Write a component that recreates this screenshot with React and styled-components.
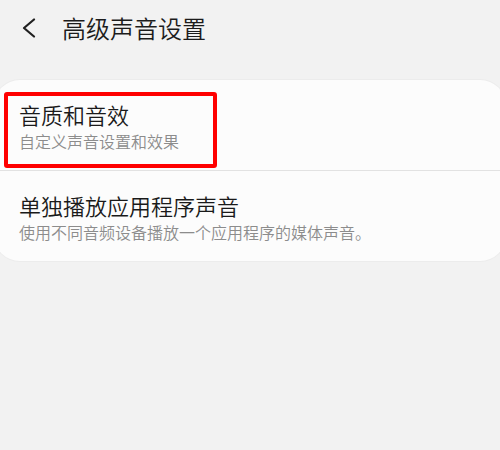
import styled, { createGlobalStyle } from 'styled-components';

const GlobalStyle = createGlobalStyle`
  html, body {
    margin: 0;
    padding: 0;
    background: #f2f2f2;
    overflow: hidden;
  }
  body {
    font-family: "Noto Sans CJK SC", "Noto Sans", sans-serif;
  }
`;

const items = [
  { title: '音质和音效', desc: '自定义声音设置和效果', marked: true },
  { title: '单独播放应用程序声音', desc: '使用不同音频设备播放一个应用程序的媒体声音。' },
];

const App = () => {
  return (
    <StPage>
      <GlobalStyle />
      <StHeader>
        <svg width="14" height="20" viewBox="0 0 14 20">
          <polyline points="12,1.5 2,10 12,18.5" fill="none" stroke="#202020" strokeWidth="2.2" strokeLinecap="round" strokeLinejoin="round" />
        </svg>
        <StHeaderTitle>高级声音设置</StHeaderTitle>
      </StHeader>
      <StCard>
        {items.map((item, i) => (
          <StRow key={item.title} $last={i === items.length - 1}>
            <StTitle>{item.title}</StTitle>
            <StDesc>{item.desc}</StDesc>
            {item.marked && <StMark />}
          </StRow>
        ))}
      </StCard>
    </StPage>
  );
};

export default App;

const StPage = styled.div`
  width: 500px;
  height: 450px;
  background: #f2f2f2;
`;

const StHeader = styled.header`
  display: flex;
  align-items: center;
  gap: 26px;
  height: 56px;
  padding-left: 22px;
  margin-bottom: 24px;
`;

const StHeaderTitle = styled.h1`
  margin: 0;
  font-size: 24px;
  font-weight: 350;
  color: #1c1c1c;
  line-height: 30px;
`;

const StCard = styled.ul`
  list-style: none;
  margin: 0 -6px;
  padding: 0;
  background: #fcfcfc;
  border-radius: 26px;
  box-shadow: 0 0 0 1px #ececec;
`;

const StRow = styled.li`
  position: relative;
  display: flex;
  flex-direction: column;
  justify-content: center;
  height: ${(p) => (p.$last ? '90px' : '91px')};
  padding: 2px 0 0 25px;
  border-bottom: ${(p) => (p.$last ? 'none' : '1px solid #e2e2e2')};
  box-sizing: border-box;
`;

const StTitle = styled.p`
  margin: 0 0 2px;
  font-size: 22px;
  font-weight: 350;
  line-height: 28px;
  color: #1a1a1a;
`;

const StDesc = styled.p`
  margin: 0;
  font-size: 16px;
  font-weight: 350;
  line-height: 22px;
  color: #8c8c8c;
`;

const StMark = styled.div`
  position: absolute;
  left: 10px;
  top: 12px;
  width: 213px;
  height: 76px;
  border: 4px solid #ff0000;
  border-radius: 3px;
  box-sizing: border-box;
`;
